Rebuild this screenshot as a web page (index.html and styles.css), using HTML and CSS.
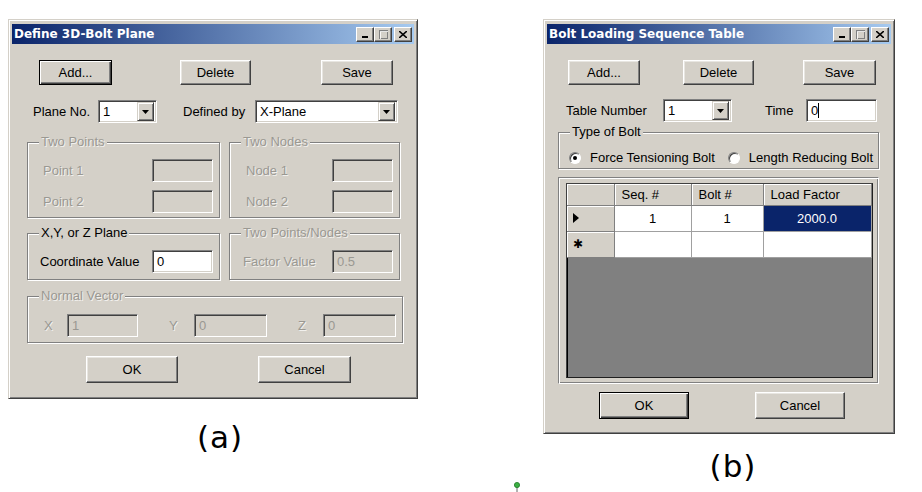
FILE: index.html
```html
<!DOCTYPE html>
<html>

<head>
    <meta charset="UTF-8">
    <meta name="viewport" content="width=device-width, initial-scale=1.0">
    <title>Bolt Dialogs</title>
    <link rel="stylesheet" href="styles.css">
</head>

<body>
    <div class="page">

        <!-- (a) Define 3D-Bolt Plane -->
        <div class="col col-a">
            <div class="window win-a">
                <div class="titlebar">
                    <span class="title">Define 3D-Bolt Plane</span>
                    <div class="caption-btns">
                        <span class="cbtn"><svg width="8" height="8"><rect x="1" y="6" width="6" height="2" fill="#000"/></svg></span>
                        <span class="cbtn"><svg width="9" height="9"><rect x="0.5" y="0.5" width="8" height="8" fill="none" stroke="#808080"/><rect x="1" y="1" width="7" height="1" fill="#808080"/><rect x="1.5" y="1.5" width="8" height="8" fill="none" stroke="#fff" opacity="0.8"/></svg></span>
                        <span class="cbtn close"><svg width="8" height="7"><path d="M0 0 L8 7 M8 0 L0 7" stroke="#000" stroke-width="1.6"/></svg></span>
                    </div>
                </div>

                <div class="content">
                    <div class="row a-row1">
                        <button class="btn default a-add">Add...</button>
                        <button class="btn a-del">Delete</button>
                        <button class="btn a-save">Save</button>
                    </div>

                    <div class="row a-row2">
                        <span class="lbl a-plane-lbl">Plane No.</span>
                        <div class="combo a-plane">
                            <span class="combo-text">1</span>
                            <span class="drop"><svg width="7" height="4"><path d="M0 0 H7 L3.5 4 Z" fill="#000"/></svg></span>
                        </div>
                        <span class="lbl a-def-lbl">Defined by</span>
                        <div class="combo a-def">
                            <span class="combo-text">X-Plane</span>
                            <span class="drop"><svg width="7" height="4"><path d="M0 0 H7 L3.5 4 Z" fill="#000"/></svg></span>
                        </div>
                    </div>

                    <div class="row a-groups1">
                        <div class="group g-left g-tall">
                            <span class="legend off">Two Points</span>
                            <div class="grow"><span class="lbl off">Point 1</span><span class="field off f60"></span></div>
                            <div class="grow"><span class="lbl off">Point 2</span><span class="field off f60"></span></div>
                        </div>
                        <div class="group g-right g-tall">
                            <span class="legend off">Two Nodes</span>
                            <div class="grow"><span class="lbl off">Node 1</span><span class="field off f60"></span></div>
                            <div class="grow"><span class="lbl off">Node 2</span><span class="field off f60"></span></div>
                        </div>
                    </div>

                    <div class="row a-groups2">
                        <div class="group g-left g-short">
                            <span class="legend">X,Y, or Z Plane</span>
                            <div class="grow"><span class="lbl">Coordinate Value</span><span class="field f60">0</span></div>
                        </div>
                        <div class="group g-right g-short">
                            <span class="legend off">Two Points/Nodes</span>
                            <div class="grow"><span class="lbl off">Factor Value</span><span class="field off f60">0.5</span></div>
                        </div>
                    </div>

                    <div class="group g-normal">
                        <span class="legend off">Normal Vector</span>
                        <div class="nrow">
                            <span class="lbl off n-x">X</span><span class="field off n-f1">1</span>
                            <span class="lbl off n-y">Y</span><span class="field off n-f">0</span>
                            <span class="lbl off n-z">Z</span><span class="field off n-f">0</span>
                        </div>
                    </div>

                    <div class="row a-bottom">
                        <button class="btn a-ok">OK</button>
                        <button class="btn a-cancel">Cancel</button>
                    </div>
                </div>
            </div>
            <div class="fig-label lbl-a">(a)</div>
        </div>

        <!-- (b) Bolt Loading Sequence Table -->
        <div class="col col-b">
            <div class="window win-b">
                <div class="titlebar">
                    <span class="title">Bolt Loading Sequence Table</span>
                    <div class="caption-btns">
                        <span class="cbtn"><svg width="8" height="8"><rect x="1" y="6" width="6" height="2" fill="#000"/></svg></span>
                        <span class="cbtn"><svg width="9" height="9"><rect x="0.5" y="0.5" width="8" height="8" fill="none" stroke="#808080"/><rect x="1" y="1" width="7" height="1" fill="#808080"/><rect x="1.5" y="1.5" width="8" height="8" fill="none" stroke="#fff" opacity="0.8"/></svg></span>
                        <span class="cbtn close"><svg width="8" height="7"><path d="M0 0 L8 7 M8 0 L0 7" stroke="#000" stroke-width="1.6"/></svg></span>
                    </div>
                </div>

                <div class="content">
                    <div class="row b-row1">
                        <button class="btn b-add">Add...</button>
                        <button class="btn b-del">Delete</button>
                        <button class="btn b-save">Save</button>
                    </div>

                    <div class="row b-row2">
                        <span class="lbl b-tn-lbl">Table Number</span>
                        <div class="combo b-tn">
                            <span class="combo-text">1</span>
                            <span class="drop"><svg width="7" height="4"><path d="M0 0 H7 L3.5 4 Z" fill="#000"/></svg></span>
                        </div>
                        <span class="lbl b-time-lbl">Time</span>
                        <span class="field b-time">0<span class="caret"></span></span>
                    </div>

                    <div class="group g-bolt">
                        <span class="legend">Type of Bolt</span>
                        <div class="radios">
                            <span class="radio on"></span><span class="lbl r1">Force Tensioning Bolt</span>
                            <span class="radio"></span><span class="lbl">Length Reducing Bolt</span>
                        </div>
                    </div>

                    <div class="grid-frame">
                        <div class="grid">
                            <table>
                                <tr class="hdr">
                                    <th class="rh"></th>
                                    <th class="c1">Seq. #</th>
                                    <th class="c2">Bolt #</th>
                                    <th class="c3">Load Factor</th>
                                </tr>
                                <tr class="data">
                                    <td class="rh"><svg width="6" height="10"><path d="M0 0 L6 5 L0 10 Z" fill="#000"/></svg></td>
                                    <td>1</td>
                                    <td>1</td>
                                    <td class="sel">2000.0</td>
                                </tr>
                                <tr class="data">
                                    <td class="rh star">&#10033;</td>
                                    <td></td>
                                    <td></td>
                                    <td></td>
                                </tr>
                            </table>
                        </div>
                    </div>

                    <div class="row b-bottom">
                        <button class="btn default b-ok">OK</button>
                        <button class="btn b-cancel">Cancel</button>
                    </div>
                </div>
            </div>
            <div class="fig-label lbl-b">(b)</div>
        </div>
    </div>

    <svg class="pin" width="8" height="12"><line x1="4" y1="5" x2="4" y2="11" stroke="#666" stroke-width="1"/><circle cx="4" cy="4" r="2.6" fill="#3cb043" stroke="#1e7a25" stroke-width="0.8"/></svg>
</body>

</html>
```

FILE: styles.css
```css
* {
    box-sizing: border-box;
}

body {
    margin: 0;
    background: #fff;
    font-family: "Liberation Sans", Arial, sans-serif;
    font-size: 13px;
    color: #000;
}

.page {
    display: flex;
    align-items: flex-start;
    padding-top: 19px;
}

.col-a {
    margin-left: 8px;
    width: 410px;
}

.col-b {
    margin-left: 125px;
    width: 352px;
}

/* window frame */
.window {
    background: #d4d0c8;
    border: 1px solid;
    border-color: #d4d0c8 #404040 #404040 #d4d0c8;
    box-shadow: inset 1px 1px #fff, inset -1px -1px #808080;
    padding: 4px 3px 3px 3px;
}

.win-a {
    height: 380px;
}

.win-b {
    height: 415px;
}

.titlebar {
    height: 20px;
    display: flex;
    align-items: center;
    justify-content: space-between;
    padding: 0 2px 0 2px;
    background: linear-gradient(to right, #0a246a, #a6caf0);
}

.title {
    color: #fff;
    font-family: "DejaVu Sans", Verdana, sans-serif;
    font-weight: bold;
    font-size: 12px;
}

.caption-btns {
    display: flex;
}

.cbtn {
    width: 18px;
    height: 15px;
    background: #d4d0c8;
    border: 1px solid;
    border-color: #fff #404040 #404040 #fff;
    box-shadow: inset -1px -1px #808080;
    display: flex;
    align-items: center;
    justify-content: center;
}

.cbtn.close {
    margin-left: 2px;
}

.row {
    display: flex;
    align-items: center;
}

/* buttons */
.btn {
    font-family: inherit;
    font-size: 13px;
    color: #000;
    background: #d4d0c8;
    border: 1px solid;
    border-color: #fff #404040 #404040 #fff;
    box-shadow: inset -1px -1px #808080, inset 1px 1px #e8e6e1;
    padding: 0;
    height: 25px;
}

.btn.default {
    border: 1px solid #000;
    box-shadow: inset 1px 1px #fff, inset -1px -1px #404040, inset -2px -2px #808080;
}

/* inputs */
.field {
    display: flex;
    align-items: center;
    height: 23px;
    padding-left: 4px;
    background: #fff;
    border: 1px solid;
    border-color: #808080 #fff #fff #808080;
    box-shadow: inset 1px 1px #404040, inset -1px -1px #d4d0c8;
}

.field.off {
    background: #d4d0c8;
    color: #9a9892;
}

.f60 {
    width: 61px;
}

.combo {
    display: flex;
    align-items: center;
    justify-content: space-between;
    height: 23px;
    padding: 2px 2px 2px 4px;
    background: #fff;
    border: 1px solid;
    border-color: #808080 #fff #fff #808080;
    box-shadow: inset 1px 1px #404040, inset -1px -1px #d4d0c8;
}

.drop {
    width: 17px;
    height: 19px;
    background: #d4d0c8;
    border: 1px solid;
    border-color: #d4d0c8 #404040 #404040 #d4d0c8;
    box-shadow: inset 1px 1px #fff, inset -1px -1px #808080;
    display: flex;
    align-items: center;
    justify-content: center;
}

.lbl.off,
.legend.off {
    color: #9a9892;
    text-shadow: 1px 1px rgba(255, 255, 255, 0.7);
}

/* group boxes */
.group {
    position: relative;
    border: 1px solid #808080;
    box-shadow: inset 1px 1px #fff, 1px 1px #fff;
}

.legend {
    position: absolute;
    top: -9px;
    left: 11px;
    padding: 0 2px;
    background: #d4d0c8;
    line-height: 16px;
}

.grow {
    display: flex;
    align-items: center;
    justify-content: space-between;
    padding-right: 6px;
}

/* window (a) layout */
.a-row1 {
    margin-top: 16px;
    padding-left: 27px;
}

.a-add {
    width: 73px;
}

.a-del {
    width: 71px;
    margin-left: 68px;
}

.a-save {
    width: 72px;
    margin-left: 70px;
}

.a-row2 {
    margin-top: 15px;
    padding-left: 21px;
}

.a-plane-lbl {
    width: 65px;
}

.a-plane {
    width: 59px;
}

.a-def-lbl {
    width: 72px;
    margin-left: 26px;
}

.a-def {
    width: 143px;
}

.a-groups1 {
    margin-top: 19px;
    padding-left: 15px;
    align-items: stretch;
}

.a-groups2 {
    margin-top: 15px;
    padding-left: 15px;
    align-items: stretch;
}

.g-left {
    width: 193px;
}

.g-right {
    width: 171px;
    margin-left: 9px;
}

.g-tall {
    height: 76px;
    padding-top: 16px;
}

.g-tall .grow + .grow {
    margin-top: 8px;
}

.g-tall.g-left .grow {
    padding-left: 15px;
}

.g-tall.g-right .grow {
    padding-left: 16px;
}

.g-short {
    height: 47px;
    padding-top: 16px;
}

.g-short.g-left .grow {
    padding-left: 12px;
}

.g-short.g-right .grow {
    padding-left: 13px;
}

.g-normal {
    margin-top: 16px;
    margin-left: 15px;
    width: 376px;
    height: 47px;
    padding-top: 17px;
}

.nrow {
    display: flex;
    align-items: center;
    padding-left: 16px;
}

.n-x {
    width: 23px;
}

.n-f1 {
    width: 71px;
}

.n-y,
.n-z {
    width: 25px;
    margin-left: 31px;
}

.n-f {
    width: 73px;
}

.a-bottom {
    margin-top: 13px;
    padding-left: 74px;
}

.a-ok {
    width: 92px;
    height: 27px;
}

.a-cancel {
    width: 93px;
    height: 27px;
    margin-left: 80px;
}

/* window (b) layout */
.b-row1 {
    margin-top: 16px;
    padding-left: 21px;
}

.b-add {
    width: 72px;
}

.b-del {
    width: 71px;
    margin-left: 43px;
}

.b-save {
    width: 73px;
    margin-left: 49px;
}

.b-row2 {
    margin-top: 14px;
    padding-left: 19px;
}

.b-tn-lbl {
    width: 97px;
}

.b-tn {
    width: 69px;
}

.b-time-lbl {
    width: 41px;
    margin-left: 33px;
}

.b-time {
    width: 71px;
}

.caret {
    display: inline-block;
    width: 1px;
    height: 15px;
    background: #000;
}

.g-bolt {
    margin-top: 10px;
    margin-left: 11px;
    width: 321px;
    height: 37px;
    padding-top: 17px;
}

.radios {
    display: flex;
    align-items: center;
    padding-left: 10px;
}

.radio {
    position: relative;
    width: 12px;
    height: 12px;
    border-radius: 50%;
    background: #fff;
    border: 1px solid;
    border-color: #808080 #fff #fff #808080;
    box-shadow: inset 1px 1px #404040;
    margin-right: 9px;
}

.radio.on::after {
    content: "";
    position: absolute;
    left: 3px;
    top: 3px;
    width: 4px;
    height: 4px;
    border-radius: 50%;
    background: #000;
}

.r1 {
    margin-right: 13px;
}

.grid-frame {
    margin-top: 8px;
    margin-left: 11px;
    width: 321px;
    height: 207px;
    padding: 5px 0 0 7px;
    border: 1px solid;
    border-color: #808080 #fff #fff #808080;
    box-shadow: inset 1px 1px #fff, inset -1px -1px #808080;
}

.grid {
    width: 307px;
    height: 195px;
    background: #808080;
    border: 1px solid;
    border-color: #404040 #202020 #202020 #404040;
    box-shadow: inset 1px 1px #000;
}

.grid table {
    border-collapse: collapse;
    table-layout: fixed;
}

.grid th {
    height: 21px;
    padding: 0 0 0 7px;
    text-align: left;
    font-weight: normal;
    background: #d4d0c8;
    border-right: 1px solid #808080;
    border-bottom: 1px solid #808080;
    box-shadow: inset 1px 1px #fff;
}

.grid td {
    height: 26px;
    padding: 0;
    text-align: center;
    background: #fff;
    border-right: 1px solid #a0a0a0;
    border-bottom: 1px solid #a0a0a0;
}

.grid .rh {
    width: 47px;
    background: #d4d0c8;
    text-align: left;
    padding-left: 6px;
    border-right: 1px solid #808080;
    border-bottom: 1px solid #808080;
    box-shadow: inset 1px 1px #fff;
}

.grid td.rh svg {
    display: block;
}

.grid .star {
    font-size: 12px;
}

.grid .c1 {
    width: 77px;
}

.grid .c2 {
    width: 72px;
}

.grid .c3 {
    width: 108px;
}

.grid td.sel {
    background: #0a246a;
    color: #fff;
}

.b-bottom {
    margin-top: 8px;
    padding-left: 52px;
}

.b-ok {
    width: 90px;
    height: 27px;
}

.b-cancel {
    width: 90px;
    height: 27px;
    margin-left: 66px;
}

/* figure labels */
.fig-label {
    font-family: "DejaVu Sans", Verdana, sans-serif;
    font-size: 31px;
    letter-spacing: 1px;
    text-align: center;
    line-height: 34px;
}

.lbl-a {
    margin-top: 21px;
    padding-left: 14px;
}

.lbl-b {
    margin-top: 15px;
    padding-left: 28px;
}

.pin {
    position: absolute;
    left: 513px;
    top: 481px;
}
```
